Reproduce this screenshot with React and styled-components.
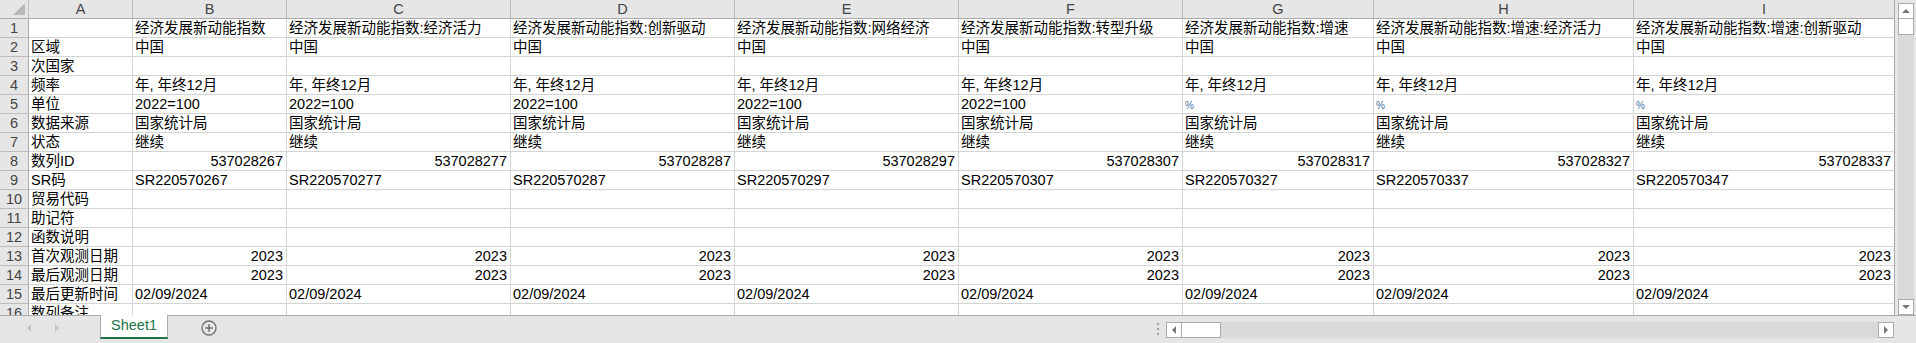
import React from "react";
import styled, { createGlobalStyle } from "styled-components";

const GlobalStyle = createGlobalStyle`
  html, body {
    margin: 0;
    padding: 0;
    background: #e6e6e6;
  }
`;

const columns = [
  { key: "A", width: 104 },
  { key: "B", width: 154 },
  { key: "C", width: 224 },
  { key: "D", width: 224 },
  { key: "E", width: 224 },
  { key: "F", width: 224 },
  { key: "G", width: 191 },
  { key: "H", width: 260 },
  { key: "I", width: 261 },
];

const titles = [
  "经济发展新动能指数",
  "经济发展新动能指数:经济活力",
  "经济发展新动能指数:创新驱动",
  "经济发展新动能指数:网络经济",
  "经济发展新动能指数:转型升级",
  "经济发展新动能指数:增速",
  "经济发展新动能指数:增速:经济活力",
  "经济发展新动能指数:增速:创新驱动",
];

const ids = ["267", "277", "287", "297", "307", "317", "327", "337"];
const srs = ["267", "277", "287", "297", "307", "327", "337", "347"];

const same = (v) => titles.map(() => v);

// 每一行: 标签 + 8 个数据格 (文字, 对齐)
const rows = [
  ["", titles],
  ["区域", same("中国")],
  ["次国家", same("")],
  ["频率", same("年, 年终12月")],
  ["单位", titles.map((_, i) => (i < 5 ? "2022=100" : "%"))],
  ["数据来源", same("国家统计局")],
  ["状态", same("继续")],
  ["数列ID", ids.map((s) => "537028" + s), "right"],
  ["SR码", srs.map((s) => "SR220570" + s)],
  ["贸易代码", same("")],
  ["助记符", same("")],
  ["函数说明", same("")],
  ["首次观测日期", same("2023"), "right"],
  ["最后观测日期", same("2023"), "right"],
  ["最后更新时间", same("02/09/2024")],
  ["数列备注", same("")],
];

export default function App() {
  return (
    <>
      <GlobalStyle />
      <Window>
        <TopArea>
          <SheetPane>
            <Grid $cols={columns.map((c) => c.width + "px").join(" ")}>
              <Corner>
                <CornerTriangle />
              </Corner>
              {columns.map((c) => (
                <ColHeader key={c.key}>{c.key}</ColHeader>
              ))}
              {rows.map(([label, values, align], r) => (
                <React.Fragment key={r}>
                  <RowHeader>{r + 1}</RowHeader>
                  <Cell>{label}</Cell>
                  {values.map((v, i) => (
                    <Cell key={i} $align={align}>
                      {v === "%" ? <Percent>%</Percent> : v}
                    </Cell>
                  ))}
                </React.Fragment>
              ))}
            </Grid>
          </SheetPane>
          <VScrollArea>
            <VScroll>
              <ScrollButton>
                <Arrow $dir="up" />
              </ScrollButton>
              <VThumb />
              <VTrack />
              <ScrollButton>
                <Arrow $dir="down" />
              </ScrollButton>
            </VScroll>
          </VScrollArea>
        </TopArea>

        <TabBar>
          <NavArrows>
            <Arrow $dir="left" $faint />
            <Arrow $dir="right" $faint />
          </NavArrows>
          <SheetTab>Sheet1</SheetTab>
          <AddSheet>
            <svg width="16" height="16" viewBox="0 0 16 16">
              <circle cx="8" cy="8" r="7" fill="none" stroke="#6f6f6f" strokeWidth="1.3" />
              <path d="M8 4.2v7.6M4.2 8h7.6" stroke="#6f6f6f" strokeWidth="1.5" />
            </svg>
          </AddSheet>
          <Spacer />
          <Splitter>
            <Dot />
            <Dot />
            <Dot />
          </Splitter>
          <HScroll>
            <ScrollButton $h>
              <Arrow $dir="left" />
            </ScrollButton>
            <HThumb />
            <HTrack />
            <ScrollButton $h>
              <Arrow $dir="right" />
            </ScrollButton>
          </HScroll>
        </TabBar>
      </Window>
    </>
  );
}

const Window = styled.div`
  width: 1916px;
  height: 343px;
  display: flex;
  flex-direction: column;
  background: #e6e6e6;
  overflow: hidden;
  font-family: "Liberation Sans", "Noto Sans CJK SC", sans-serif;
`;

const TopArea = styled.div`
  display: flex;
  height: 315px;
  border-bottom: 1px solid #ababab;
`;

const SheetPane = styled.div`
  width: 1894px;
  height: 315px;
  overflow: hidden;
  background: #fff;
  border-right: 1px solid #ababab;
`;

const Grid = styled.div`
  display: grid;
  grid-template-columns: 29px ${(p) => p.$cols};
  grid-auto-rows: 19px;
  width: max-content;
`;

const Corner = styled.div`
  position: relative;
  background: #e6e6e6;
  border-right: 1px solid #bcbcbc;
  border-bottom: 1px solid #ababab;
`;

/* 左上角的小三角 */
const CornerTriangle = styled.div`
  position: absolute;
  right: 3px;
  bottom: 3px;
  width: 0;
  height: 0;
  border-left: 12px solid transparent;
  border-bottom: 12px solid #b9b9b9;
`;

const ColHeader = styled.div`
  background: #e6e6e6;
  border-right: 1px solid #bcbcbc;
  border-bottom: 1px solid #ababab;
  color: #444;
  font-size: 14.5px;
  line-height: 19px;
  text-align: center;
`;

const RowHeader = styled.div`
  background: #e6e6e6;
  border-right: 1px solid #ababab;
  border-bottom: 1px solid #bcbcbc;
  color: #444;
  font-size: 14.5px;
  line-height: 19px;
  text-align: center;
`;

const Cell = styled.div`
  border-right: 1px solid #d4d4d4;
  border-bottom: 1px solid #d4d4d4;
  color: #000;
  font-size: 14.5px;
  line-height: 19px;
  padding: 0 3px 0 2px;
  white-space: nowrap;
  overflow: hidden;
  text-align: ${(p) => p.$align || "left"};
`;

const Percent = styled.span`
  font-size: 10px;
  color: #3b6fa0;
`;

const VScrollArea = styled.div`
  width: 21px;
  padding-left: 3px;
  box-sizing: border-box;
  padding-top: 3px;
`;

const VScroll = styled.div`
  width: 16px;
  height: 312px;
  display: flex;
  flex-direction: column;
  background: #dadada;
`;

const ScrollButton = styled.div`
  width: ${(p) => (p.$h ? "14px" : "14px")};
  height: 14px;
  flex: none;
  display: flex;
  align-items: center;
  justify-content: center;
  background: #fff;
  border: 1px solid #ababab;
`;

const VThumb = styled.div`
  height: 15px;
  flex: none;
  background: #fff;
  border: 1px solid #ababab;
  border-top: none;
`;

const VTrack = styled.div`
  flex: 1;
`;

const Arrow = styled.div`
  width: 0;
  height: 0;
  border-style: solid;
  border-color: transparent;
  ${(p) => {
    const c = p.$faint ? "#c2c2c2" : "#777";
    if (p.$dir === "up") return `border-width: 0 4px 4px 4px; border-bottom-color: ${c};`;
    if (p.$dir === "down") return `border-width: 4px 4px 0 4px; border-top-color: ${c};`;
    if (p.$dir === "left") return `border-width: 4px 4px 4px 0; border-right-color: ${c};`;
    return `border-width: 4px 0 4px 4px; border-left-color: ${c};`;
  }}
`;

const TabBar = styled.div`
  flex: 1;
  display: flex;
  align-items: flex-start;
  background: #e6e6e6;
`;

const NavArrows = styled.div`
  width: 100px;
  height: 24px;
  display: flex;
  align-items: center;
  gap: 24px;
  padding-left: 27px;
  box-sizing: border-box;
`;

const SheetTab = styled.div`
  width: 68px;
  height: 21px;
  margin-top: -1px;
  box-sizing: border-box;
  background: #fff;
  border-left: 1px solid #ababab;
  border-right: 1px solid #ababab;
  border-bottom: 2px solid #217346;
  color: #217346;
  font-size: 14.5px;
  line-height: 21px;
  text-align: center;
  height: 24px;
`;

const AddSheet = styled.div`
  margin-left: 33px;
  margin-top: 4px;
  display: flex;
`;

const Spacer = styled.div`
  flex: 1;
`;

const Splitter = styled.div`
  width: 16px;
  height: 12px;
  margin-top: 7px;
  display: flex;
  flex-direction: column;
  align-items: center;
  justify-content: space-between;
`;

const Dot = styled.div`
  width: 2px;
  height: 2px;
  background: #a0a0a0;
`;

const HScroll = styled.div`
  width: 728px;
  height: 16px;
  margin-top: 6px;
  margin-right: 22px;
  display: flex;
  background: #dadada;
`;

const HThumb = styled.div`
  width: 38px;
  flex: none;
  background: #fff;
  border: 1px solid #ababab;
  border-left: none;
`;

const HTrack = styled.div`
  flex: 1;
`;
